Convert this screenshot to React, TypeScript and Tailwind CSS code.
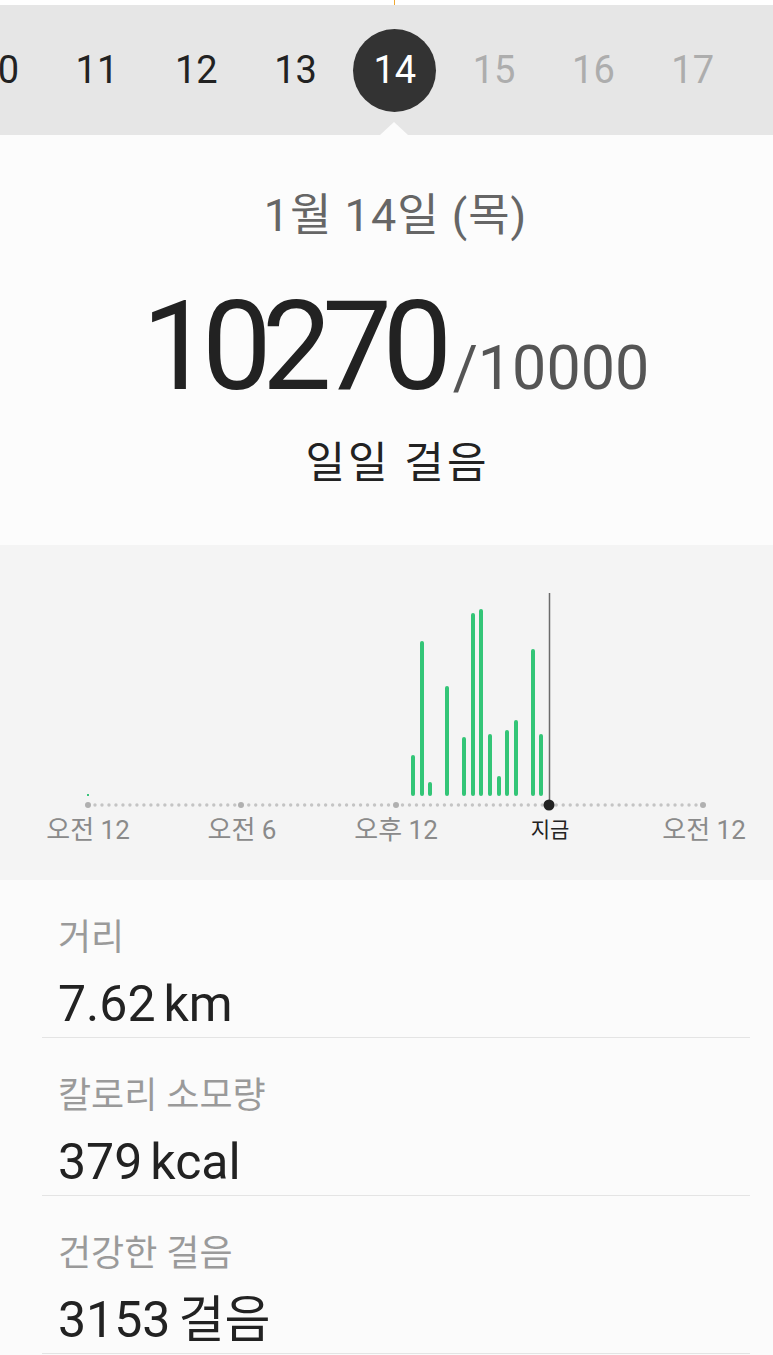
import * as React from 'react';

const days = [10, 11, 12, 13, 14, 15, 16, 17];

// bar center x, top y (in page px), bottoms sit at 796
const bars: [number, number][] = [
  [413, 755], [422, 641], [430, 782], [447, 686], [464, 737], [473, 613], [481, 609],
  [490, 734], [499, 776], [507, 730], [516, 720], [533, 649], [541, 734],
];

const axisLabels = ['오전 12', '오전 6', '오후 12', '지금', '오전 12'];

const rows = [
  { label: '거리', value: '7.62', unit: 'km' },
  { label: '칼로리 소모량', value: '379', unit: 'kcal' },
  { label: '건강한 걸음', value: '3153', unit: '걸음' },
];

function DayStrip() {
  return (
    <div className="relative">
      <div className="h-[5px] bg-white flex justify-start">
        <div className="ml-[394px] w-px h-[5px] bg-[#f0a830]" />
      </div>
      <div className="relative h-[130px] bg-[#e6e6e6] overflow-hidden">
        <div className="flex h-full items-center -ml-[52px]">
          {days.map((d) => (
            <div key={d} className="w-[99.3px] shrink-0 flex justify-center items-center">
              {d === 14 ? (
                <div className="w-[83px] h-[83px] rounded-full bg-[#333333] flex items-center justify-center text-white text-[38px] leading-none font-['Roboto',sans-serif]">
                  {d}
                </div>
              ) : (
                <span
                  className={
                    'text-[38px] leading-none font-[\'Roboto\',sans-serif] ' +
                    (d < 14 ? 'text-[#222222]' : 'text-[#adadad]')
                  }
                >
                  {d}
                </span>
              )}
            </div>
          ))}
        </div>
        <div className="absolute left-[380px] bottom-0 w-0 h-0 border-l-[14px] border-r-[14px] border-b-[13px] border-l-transparent border-r-transparent border-b-[#fcfcfc]" />
      </div>
    </div>
  );
}

function Summary() {
  return (
    <div className="h-[410px] bg-[#fcfcfc] flex flex-col items-center font-['Roboto','Noto_Sans_CJK_KR',sans-serif]">
      <div className="mt-[55px] ml-[18px] text-[45px] leading-[52px] tracking-[1px] text-[#666666]">1월 14일 (목)</div>
      <div className="mt-[50px] flex items-baseline ml-[18px]">
        <span className="text-[124px] leading-[110px] tracking-[-9.5px] text-[#222222]">10270</span>
        <span className="ml-[10px] text-[61px] leading-none text-[#555555]">/10000</span>
      </div>
      <div className="mt-[36px] ml-[22px] text-[43px] leading-[50px] tracking-[3px] text-[#222222]">일일 걸음</div>
    </div>
  );
}

function Chart() {
  const x0 = 88;
  const x1 = 703;
  const top = 545;
  const dots: number[] = [];
  for (let x = x0; x <= x1 + 0.1; x += 615 / 88) dots.push(x);
  return (
    <div className="h-[335px] bg-[#f4f4f4] font-['Roboto','Noto_Sans_CJK_KR',sans-serif]">
      <svg width="773" height="270" viewBox="0 0 773 270" className="block">
        {dots.map((x, i) => (
          <circle key={i} cx={x} cy={805 - top} r={1.7} fill="#c4c4c4" />
        ))}
        {[88, 241, 396, 703].map((x) => (
          <circle key={x} cx={x} cy={805 - top} r={3} fill="#b0b0b0" />
        ))}
        <rect x={87} y={794 - top} width={2} height={2} fill="#3cc47c" />
        {bars.map(([x, t]) => (
          <line
            key={x}
            x1={x}
            x2={x}
            y1={t - top + 2}
            y2={796 - top - 2}
            stroke="#33c577"
            strokeWidth={4}
            strokeLinecap="round"
          />
        ))}
        <line x1={549.5} x2={549.5} y1={593 - top} y2={805 - top} stroke="#6b6b6b" strokeWidth={1.5} />
        <circle cx={549} cy={805 - top} r={5.5} fill="#222222" />
      </svg>
      <div className="flex ml-[11px]">
        {axisLabels.map((l, i) => (
          <div key={i} className="w-[154px] shrink-0 flex justify-center">
            <span
              className={
                l === '지금'
                  ? 'text-[21px] leading-[30px] text-[#222222]'
                  : 'text-[26px] leading-[30px] text-[#8a8a8a]'
              }
            >
              {l}
            </span>
          </div>
        ))}
      </div>
    </div>
  );
}

function Stats() {
  return (
    <div className="bg-[#fbfbfb] pb-[20px] font-['Roboto','Noto_Sans_CJK_KR',sans-serif]">
      {rows.map((r) => (
        <div key={r.label} className="ml-[42px] mr-[23px] border-b border-[#e4e4e4] pt-[38px] pb-[5px]">
          <div className="pl-[16px] text-[36px] leading-[41px] text-[#9a9a9a]">{r.label}</div>
          <div className="pl-[16px] mt-[17px] text-[50px] leading-[56px] text-[#222222] flex items-baseline">
            <span>{r.value}</span>
            <span className="ml-[8px]">{r.unit}</span>
          </div>
        </div>
      ))}
    </div>
  );
}

export default function App() {
  return (
    <div className="w-[773px] h-[1355px] overflow-hidden bg-[#fbfbfb]">
      <DayStrip />
      <Summary />
      <Chart />
      <Stats />
    </div>
  );
}
